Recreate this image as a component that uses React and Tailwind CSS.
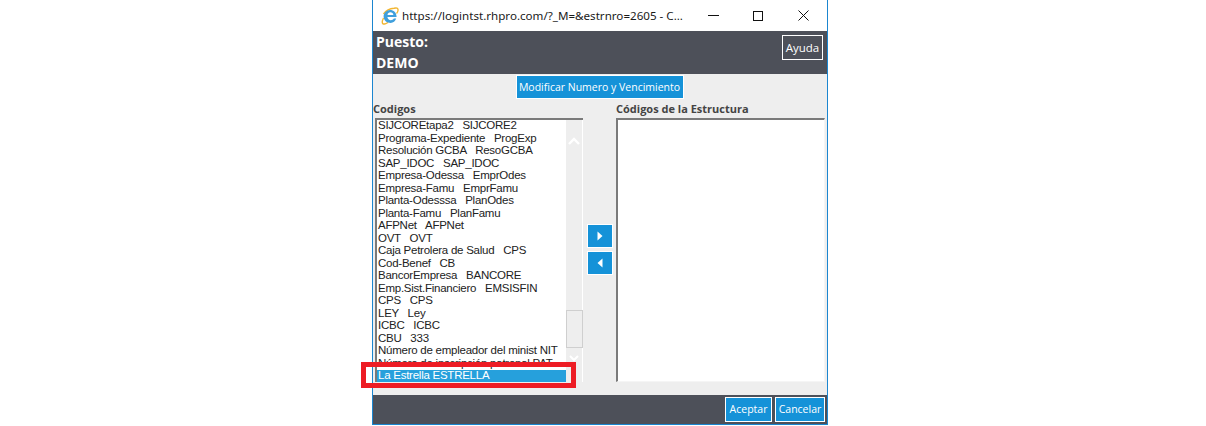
import React from 'react';

const codigos = [
  'SIJCOREtapa2   SIJCORE2',
  'Programa-Expediente   ProgExp',
  'Resolución GCBA   ResoGCBA',
  'SAP_IDOC   SAP_IDOC',
  'Empresa-Odessa   EmprOdes',
  'Empresa-Famu   EmprFamu',
  'Planta-Odesssa   PlanOdes',
  'Planta-Famu   PlanFamu',
  'AFPNet   AFPNet',
  'OVT   OVT',
  'Caja Petrolera de Salud   CPS',
  'Cod-Benef   CB',
  'BancorEmpresa   BANCORE',
  'Emp.Sist.Financiero   EMSISFIN',
  'CPS   CPS',
  'LEY   Ley',
  'ICBC   ICBC',
  'CBU   333',
  'Número de empleador del minist NIT',
  'Número de inscripción patronal PAT',
];

function IeLogo() {
  return (
    <svg width="18" height="18" viewBox="0 0 18 18" className="shrink-0">
      <path d="M2.5 7 C5.5 2.8 9 1.4 13 1.2 C15.5 0.6 17.4 1 17 3.5 C16.8 5 16 6 15.5 6.5" fill="none" stroke="#f2b632" strokeWidth="1.4" />
      <path d="M2.5 11 C0.5 15 1 17.5 3.5 17 C5 16.8 6 16 7 15.4" fill="none" stroke="#f2b632" strokeWidth="1.4" />
      <path d="M9 3 C12.6 3 15.6 5.6 15.6 10 H6.4 C6.6 12 8 13.2 9.8 13.2 C11.2 13.2 12.2 12.6 12.8 11.6 H15.2 C14.4 14.4 12.2 16 9.6 16 C5.8 16 2.6 13.4 2.6 9.6 C2.6 6 5.6 3 9 3 Z" fill="#3f9fdc" />
      <path d="M6.5 8 C6.7 6.2 7.9 5.2 9.4 5.2 C11 5.2 12.2 6.2 12.4 8 Z" fill="#fff" />
    </svg>
  );
}

function BlueButton({ children, className = '' }) {
  return (
    <button className={`bg-[#1592d8] border border-white text-white text-[10.5px] font-medium leading-none whitespace-nowrap ${className}`}>
      {children}
    </button>
  );
}

export default function App() {
  return (
    <div className="w-[1206px] h-[426px] bg-white flex justify-center font-['Open_Sans',sans-serif] overflow-hidden">
      <div className="relative w-[456px] h-[425px] ml-[-6px] flex flex-col border border-t-0 border-[#1b86d0] bg-white">
        {/* barra de titulo */}
        <div className="h-[31px] flex items-center bg-white pl-[8px] shrink-0">
          <IeLogo />
          <span className="ml-[3px] text-[11.6px] text-[#1a1a1a] font-['Noto_Sans',sans-serif] whitespace-nowrap">
            https://logintst.rhpro.com/?_M=&amp;estrnro=2605 - C...
          </span>
          <div className="ml-auto flex items-center pr-[18px]">
            <div className="w-[11px] h-px bg-[#111]" />
            <div className="w-[10px] h-[10px] border border-[#111] ml-[34px]" />
            <svg width="11" height="11" viewBox="0 0 11 11" className="ml-[35px]">
              <path d="M0.5 0.5 L10.5 10.5 M10.5 0.5 L0.5 10.5" stroke="#111" strokeWidth="1" />
            </svg>
          </div>
        </div>

        {/* cabecera */}
        <div className="h-[43px] bg-[#4d5059] flex justify-between shrink-0 pl-[3px] pr-[4px]">
          <div className="text-white font-bold text-[14px] leading-[21px]">
            <div>Puesto:</div>
            <div>DEMO</div>
          </div>
          <button className="mt-[4px] h-[25px] w-[41px] border border-white text-white text-[11.5px]">Ayuda</button>
        </div>

        {/* contenido */}
        <div className="flex-1 bg-[#eeeeee] flex flex-col min-h-0">
          <div className="flex justify-center pt-[1px] pr-[1px]">
            <BlueButton className="w-[168px] h-[24px]">Modificar Numero y Vencimiento</BlueButton>
          </div>
          <div className="flex pt-[2px] flex-1 min-h-0">
            <div className="w-[210px] shrink-0 flex flex-col">
              <div className="text-[11px] font-bold text-[#444] h-[17px] leading-[16px]">Codigos</div>
              <div className="ml-[2px] h-[264px] flex border-2 border-r-0 border-b-0 border-[#7a7a7a] bg-white">
                <div className="relative w-[189px] overflow-hidden pl-[1px] text-[11.5px] tracking-[-0.25px] text-[#222] font-['Liberation_Sans',sans-serif] whitespace-pre">
                  {codigos.map((c) => (
                    <div key={c} className="h-[12.5px] leading-[11px]">{c}</div>
                  ))}
                  <div className="absolute left-0 top-[250px] w-[189px] h-[12px] leading-[11px] bg-[#26a0dc] text-white pl-[1px]">La Estrella ESTRELLA</div>
                </div>
                <div className="w-[17px] bg-[#eeeeee] border-r border-white flex flex-col items-center pt-[17px] pb-[14px]">
                  <svg width="12" height="8" viewBox="0 0 12 8"><path d="M1 7 L6 2 L11 7" fill="none" stroke="#fff" strokeWidth="2.4" /></svg>
                  <div className="mt-[165px] w-[17px] h-[38px] border border-[#cfcfcf] bg-[#eeeeee]" />
                  <svg width="10" height="7" viewBox="0 0 10 7" className="mt-[7px]"><path d="M1 1 L5 5 L9 1" fill="none" stroke="#fff" strokeWidth="2" /></svg>
                </div>
              </div>
            </div>

            <div className="w-[33px] shrink-0 flex flex-col items-center pt-[123px] gap-[3px]">
              <BlueButton className="w-[26px] h-[24px] flex items-center justify-center">
                <svg width="6" height="10" viewBox="0 0 6 10"><path d="M0.5 0.5 L5.5 5 L0.5 9.5 Z" fill="#fff" /></svg>
              </BlueButton>
              <BlueButton className="w-[26px] h-[24px] flex items-center justify-center">
                <svg width="6" height="10" viewBox="0 0 6 10"><path d="M5.5 0.5 L0.5 5 L5.5 9.5 Z" fill="#fff" /></svg>
              </BlueButton>
            </div>

            <div className="flex-1 flex flex-col pr-[2px]">
              <div className="text-[11px] font-bold text-[#444] h-[17px] leading-[16px]">Códigos de la Estructura</div>
              <div className="h-[264px] bg-white border-2 border-r border-b border-t-[#7a7a7a] border-l-[#7a7a7a] border-r-[#f5f5f5] border-b-[#f5f5f5]" />
            </div>
          </div>
        </div>

        {/* pie */}
        <div className="h-[29px] bg-[#4d5059] shrink-0 flex justify-end items-start gap-[3px] pt-[2px] pr-[2px]">
          <BlueButton className="w-[47px] h-[25px]">Aceptar</BlueButton>
          <BlueButton className="w-[50px] h-[25px]">Cancelar</BlueButton>
        </div>

        {/* resaltado rojo */}
        <div className="absolute left-[-12px] top-[362px] w-[215px] h-[26px] border-[5px] border-[#ed1c24]" />
      </div>
    </div>
  );
}
